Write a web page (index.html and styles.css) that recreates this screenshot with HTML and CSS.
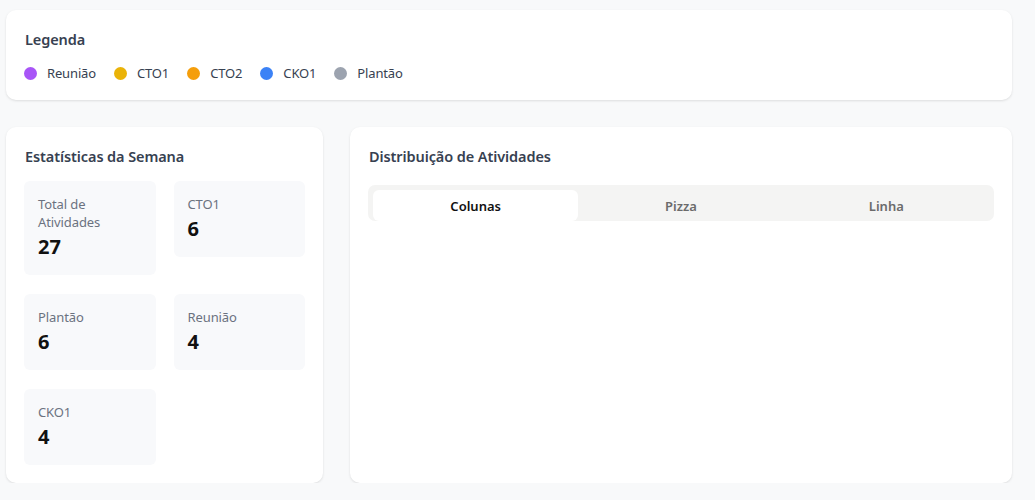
FILE: index.html
```html
<!DOCTYPE html>
<html lang="pt">
<head>
<meta charset="utf-8">
<title>Atividades</title>
<link rel="stylesheet" href="styles.css">
</head>
<body>
<div class="page">
  <section class="card legend-card">
    <h2 class="card-title">Legenda</h2>
    <ul class="legend">
      <li class="legend-item"><span class="dot dot-purple"></span>Reunião</li>
      <li class="legend-item"><span class="dot dot-yellow"></span>CTO1</li>
      <li class="legend-item"><span class="dot dot-orange"></span>CTO2</li>
      <li class="legend-item"><span class="dot dot-blue"></span>CKO1</li>
      <li class="legend-item"><span class="dot dot-gray"></span>Plantão</li>
    </ul>
  </section>
  <div class="row">
    <section class="card stats-card">
      <h2 class="card-title">Estatísticas da Semana</h2>
      <div class="stats-grid">
        <div class="stat"><div class="stat-label">Total de Atividades</div><div class="stat-value">27</div></div>
        <div class="stat"><div class="stat-label">CTO1</div><div class="stat-value">6</div></div>
        <div class="stat"><div class="stat-label">Plantão</div><div class="stat-value">6</div></div>
        <div class="stat"><div class="stat-label">Reunião</div><div class="stat-value">4</div></div>
        <div class="stat"><div class="stat-label">CKO1</div><div class="stat-value">4</div></div>
      </div>
    </section>
    <section class="card dist-card">
      <h2 class="card-title">Distribuição de Atividades</h2>
      <div class="tabs">
        <button class="tab tab-active">Colunas</button>
        <button class="tab">Pizza</button>
        <button class="tab">Linha</button>
      </div>
    </section>
  </div>
</div>
</body>
</html>
```

FILE: styles.css
```css
* { box-sizing: border-box; }
html, body { margin: 0; padding: 0; }
body {
  background: #f8f9fa;
  font-family: "Noto Sans", "Open Sans", sans-serif;
  color: #374151;
}
.page {
  width: 1006px;
  margin-left: 6px;
  padding-top: 10px;
}
.card {
  background: #ffffff;
  border-radius: 10px;
  box-shadow: 0 1px 3px rgba(0, 0, 0, 0.08), 0 1px 2px rgba(0, 0, 0, 0.04);
  padding: 18px;
}
.card-title {
  margin: 1px 0 0;
  font-size: 14.5px;
  line-height: 20px;
  font-weight: 600;
  letter-spacing: -0.1px;
  color: #374151;
  padding-left: 1px;
}
.legend-card { height: 90px; }
.legend {
  list-style: none;
  margin: 15px 0 0;
  padding: 0;
  display: flex;
  gap: 18px;
}
.legend-item {
  display: flex;
  align-items: center;
  gap: 10px;
  font-size: 13px;
  line-height: 18px;
  letter-spacing: -0.15px;
  color: #374151;
}
.dot {
  width: 13px;
  height: 13px;
  border-radius: 50%;
  display: inline-block;
}
.dot-purple { background: #a855f7; }
.dot-yellow { background: #eab308; }
.dot-orange { background: #f59e0b; }
.dot-blue { background: #3b82f6; }
.dot-gray { background: #9ca3af; }

.row {
  margin-top: 27px;
  display: grid;
  grid-template-columns: 317px 1fr;
  gap: 27px;
  align-items: stretch;
}
.stats-grid {
  margin-top: 15px;
  display: grid;
  grid-template-columns: 1fr 1fr;
  column-gap: 18px;
  row-gap: 19px;
  align-items: start;
}
.stat {
  background: #f8f9fb;
  border-radius: 6px;
  padding: 14px 14px 15px;
}
.stat-label {
  font-size: 13px;
  line-height: 18px;
  letter-spacing: -0.1px;
  color: #6b7280;
}
.stat-value {
  margin-top: 3px;
  font-size: 20px;
  line-height: 26px;
  font-weight: 700;
  color: #111111;
}
.tabs {
  margin-top: 19px;
  background: #f4f4f3;
  border-radius: 7px;
  height: 36px;
  padding: 5px 5px 0;
  display: grid;
  grid-template-columns: 1fr 1fr 1fr;
}
.tab {
  border: 0;
  background: transparent;
  font-family: inherit;
  font-size: 13px;
  font-weight: 600;
  color: #6b6b6b;
  border-radius: 6px;
  height: 31px;
  padding: 0;
  cursor: pointer;
}
.tab-active {
  background: #ffffff;
  color: #111111;
}
```
